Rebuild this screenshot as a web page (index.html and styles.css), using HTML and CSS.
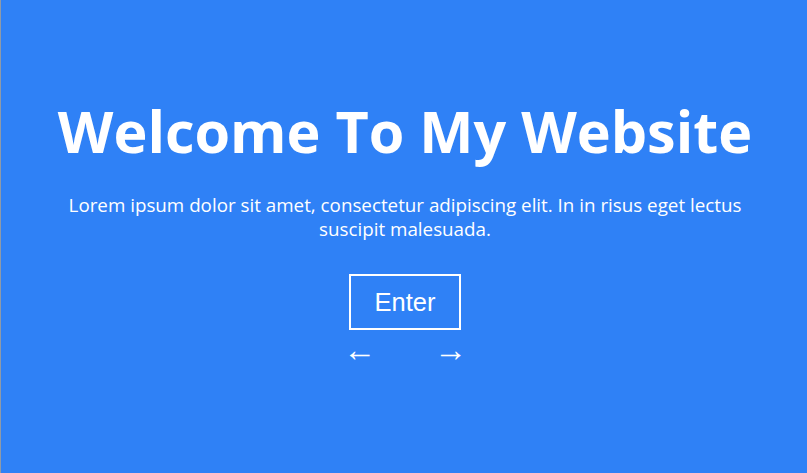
FILE: index.html
```html
<!DOCTYPE html>
<html>
<head>
<meta charset="utf-8">
<link rel="stylesheet" href="styles.css">
</head>
<body>
<main class="hero">
  <h1 class="title">Welcome To My Website</h1>
  <p class="lead">Lorem ipsum dolor sit amet, consectetur adipiscing elit. In in risus eget lectus suscipit malesuada.</p>
  <a class="enter" href="#">Enter</a>
  <div class="arrows"><span class="arrow">&larr;</span><span class="arrow">&rarr;</span></div>
</main>
</body>
</html>
```

FILE: styles.css
```css
html, body { margin: 0; padding: 0; height: 100%; }
body { background: #2f81f6; }
.hero {
  box-sizing: border-box;
  height: 100%;
  border-left: 1px solid #8f9aa8;
  display: flex;
  flex-direction: column;
  align-items: center;
  justify-content: flex-start;
  color: #fff;
  font-family: "Open Sans", sans-serif;
  text-align: center;
  padding: 97px 58px 0 60px;
}
.title {
  margin: 0;
  font-size: 57.5px;
  font-weight: 700;
  line-height: 69px;
  white-space: nowrap;
}
.lead {
  margin: 27px 0 0;
  font-size: 18.8px;
  line-height: 24px;
}
.enter {
  margin-top: 33px;
  display: block;
  box-sizing: border-box;
  width: 112px;
  height: 56px;
  line-height: 52px;
  border: 2px solid #fff;
  color: #fff;
  text-decoration: none;
  font-family: "Liberation Sans", Arial, sans-serif;
  font-size: 25.5px;
}
.arrows {
  margin-top: 4px;
  display: flex;
  gap: 58px;
  font-family: "Liberation Sans", Arial, sans-serif;
  font-size: 33px;
  line-height: 32px;
}
```
